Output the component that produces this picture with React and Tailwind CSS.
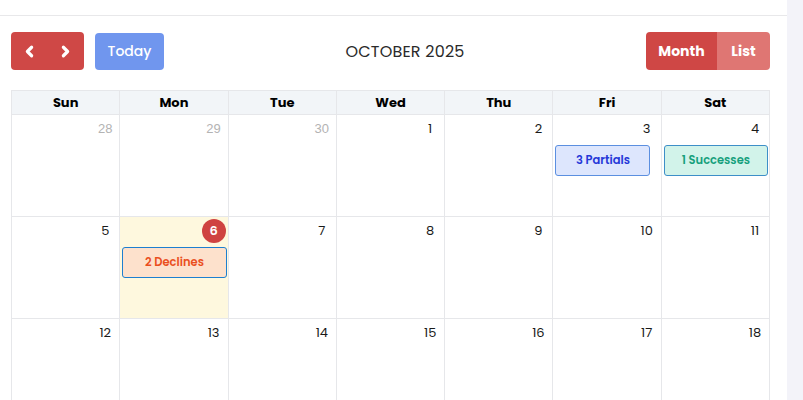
import React from 'react';
import { ChevronLeft, ChevronRight } from 'lucide-react';

const font = { fontFamily: 'Poppins, Inter, "Noto Sans", sans-serif' };

const days = ['Sun', 'Mon', 'Tue', 'Wed', 'Thu', 'Fri', 'Sat'];

const weeks = [
  [
    { d: 28, muted: true },
    { d: 29, muted: true },
    { d: 30, muted: true },
    { d: 1 },
    { d: 2 },
    { d: 3, event: { label: '3 Partials', cls: 'bg-[#dde6fd] text-[#2437d8] border-[#5b8fe0] w-[95px]' } },
    { d: 4, event: { label: '1 Successes', cls: 'bg-[#d2f3ea] text-[#15a07c] border-[#3d8fc8]' } },
  ],
  [
    { d: 5 },
    { d: 6, today: true, event: { label: '2 Declines', cls: 'bg-[#fde1cc] text-[#ea4f1e] border-[#1d7fd0]' } },
    { d: 7 },
    { d: 8 },
    { d: 9 },
    { d: 10 },
    { d: 11 },
  ],
  [
    { d: 12 }, { d: 13 }, { d: 14 }, { d: 15 }, { d: 16 }, { d: 17 }, { d: 18 },
  ],
];

function DayCell({ cell }) {
  return (
    <div className={`h-[102px] border-r border-b border-[#e6e7ea] flex flex-col ${cell.today ? 'bg-[#fef8de]' : 'bg-white'}`}>
      <div className="flex justify-end pt-[2px] pr-[2px]">
        {cell.today ? (
          <span className="w-6 h-6 rounded-full bg-[#cf4341] text-white text-[13px] font-semibold flex items-center justify-center">
            {cell.d}
          </span>
        ) : (
          <span
            className={`w-6 h-6 flex items-center justify-center text-[13px] ${cell.muted ? 'text-[#b3b3b3]' : 'text-[#1a1a1a]'}`}
            style={cell.muted ? { fontFamily: '"Liberation Sans", Arial, sans-serif' } : undefined}
          >
            {cell.d}
          </span>
        )}
      </div>
      {cell.event && (
        <div className={`mt-[4px] ml-[2px] mr-[1px] h-[31px] rounded-[3px] border flex items-center justify-center text-[11.5px] font-semibold ${cell.event.cls}`}>
          {cell.event.label}
        </div>
      )}
    </div>
  );
}

export default function App() {
  return (
    <div className="flex w-[803px] h-[400px] overflow-hidden bg-white" style={font}>
      <div className="w-[787px] shrink-0">
        <div className="h-4 border-b border-[#e8e8ea]" />
        <div className="pl-[11px] pr-[17px] pt-4">
          <div className="flex items-center justify-between h-[38px]">
            <div className="flex items-center gap-[11px]">
              <div className="flex h-[38px] w-[73px] rounded-[4px] bg-[#cf4846] text-white">
                <button type="button" className="flex-1 flex items-center justify-center">
                  <ChevronLeft size={17} strokeWidth={4.5} />
                </button>
                <button type="button" className="flex-1 flex items-center justify-center">
                  <ChevronRight size={17} strokeWidth={4.5} />
                </button>
              </div>
              <button type="button" className="h-[37px] w-[69px] rounded-[4px] bg-[#7096ee] text-white text-[14px] font-medium">
                Today
              </button>
            </div>
            <h2 className="text-[16px] font-normal text-[#2a2a2a] tracking-[0.2px] pt-[2px]">OCTOBER 2025</h2>
            <div className="flex h-[38px] rounded-[4px] overflow-hidden text-white text-[14px] font-bold">
              <button type="button" className="w-[71px] bg-[#cf4745]">Month</button>
              <button type="button" className="w-[53px] bg-[#df7673]">List</button>
            </div>
          </div>

          <div className="mt-5 border-l border-t border-[#e6e7ea]">
            <div className="grid grid-cols-7">
              {days.map((d) => (
                <div key={d} className="h-6 bg-[#f2f5f8] border-r border-b border-[#e6e7ea] flex items-center justify-center text-[13px] font-bold text-black">
                  {d}
                </div>
              ))}
            </div>
            {weeks.map((w, i) => (
              <div key={i} className="grid grid-cols-7">
                {w.map((c) => (
                  <DayCell key={c.d + '-' + i} cell={c} />
                ))}
              </div>
            ))}
          </div>
        </div>
      </div>
      <div className="flex-1 bg-[#f3f3f9]" />
    </div>
  );
}
